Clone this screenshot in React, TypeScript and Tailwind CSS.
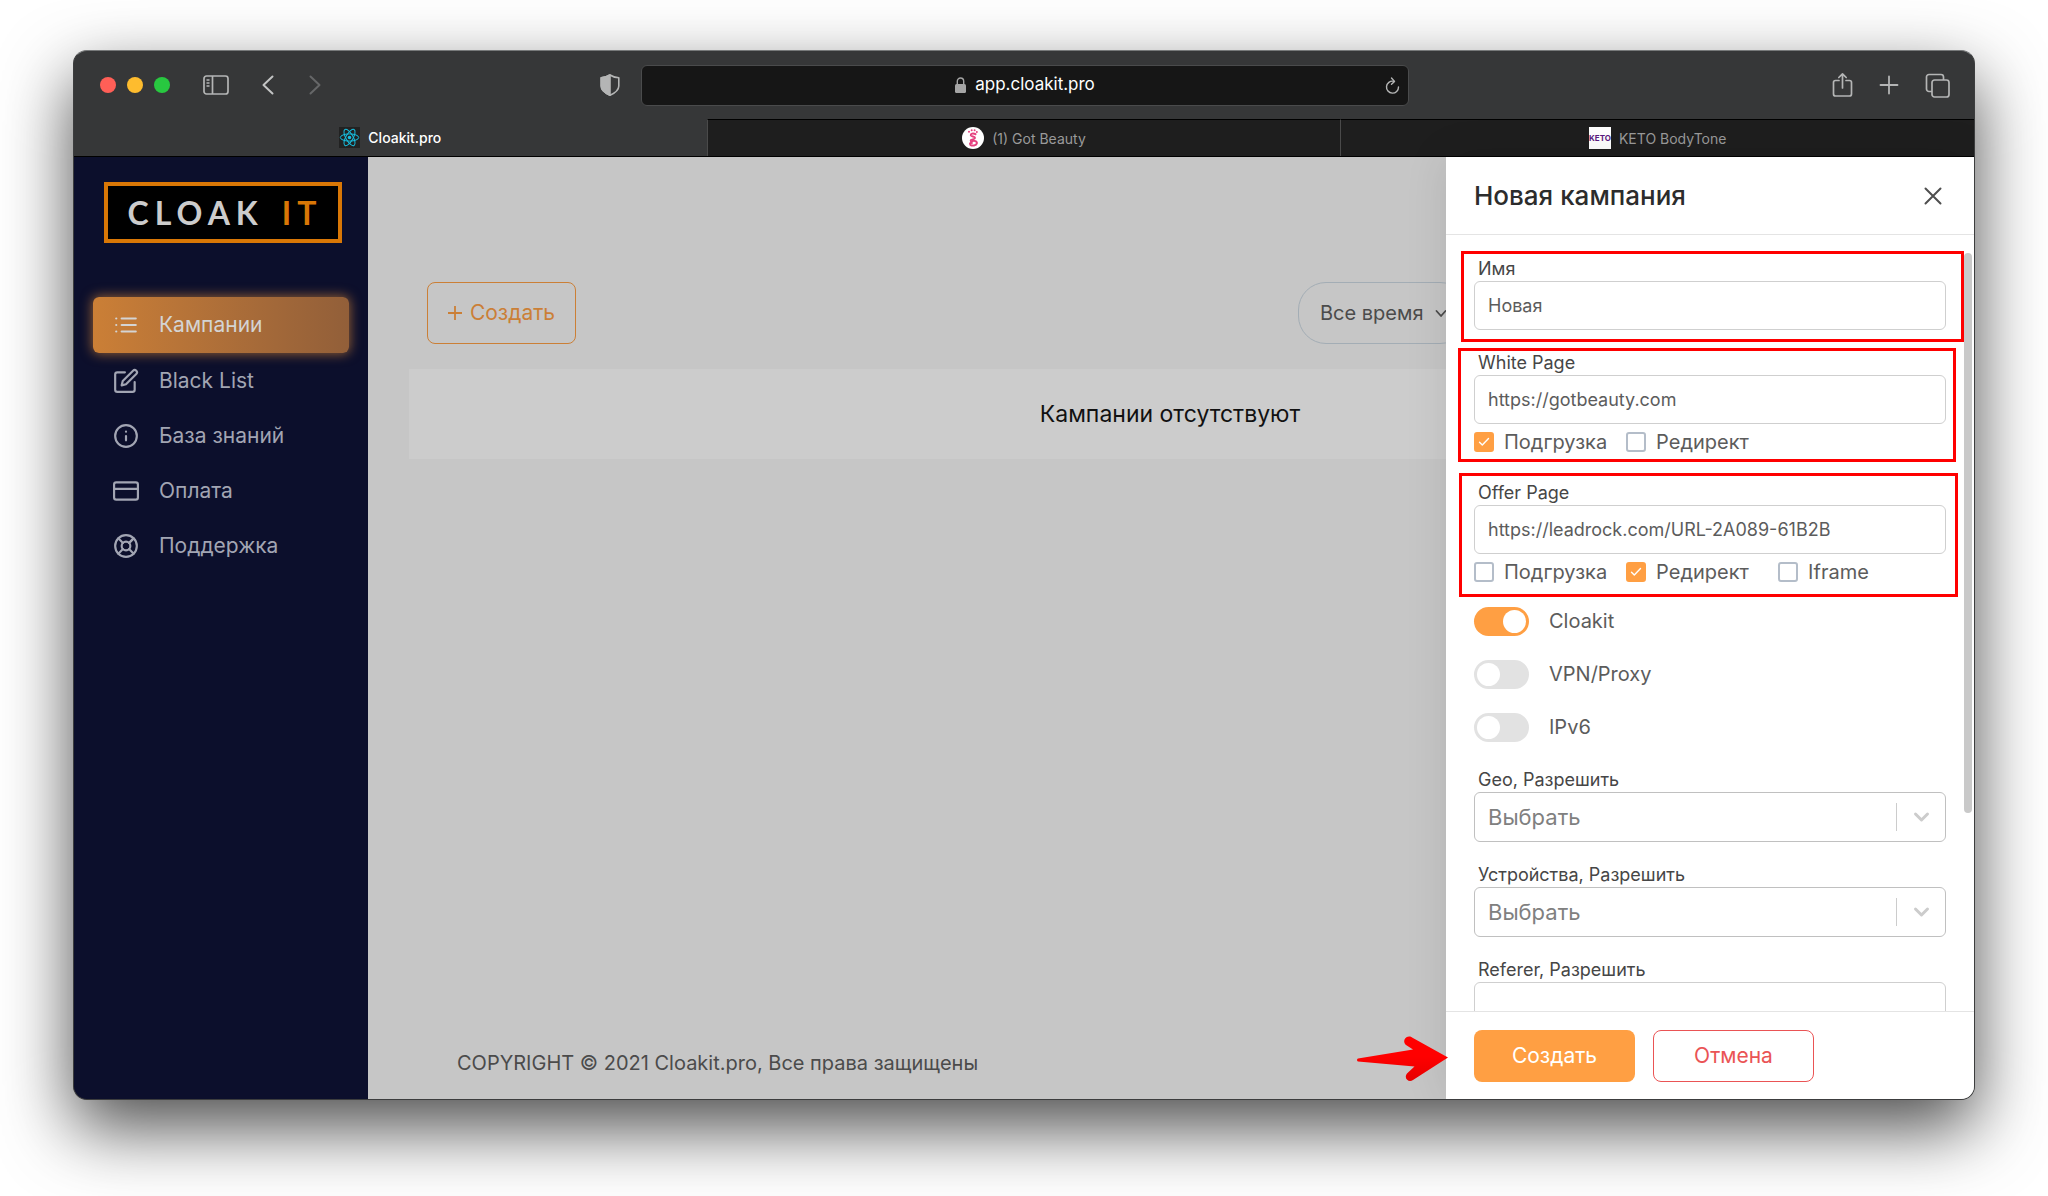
import React, { useState } from 'react';
import { FiCreditCard, FiEdit, FiInfo, FiLifeBuoy, FiList } from 'react-icons/fi';

const menuItems = [
  { label: 'Кампании', icon: FiList },
  { label: 'Black List', icon: FiEdit },
  { label: 'База знаний', icon: FiInfo },
  { label: 'Оплата', icon: FiCreditCard },
  { label: 'Поддержка', icon: FiLifeBuoy },
];

const ReactIcon: React.FC = () => (
  <svg className="w-[21px] h-[21px] bg-[#222222]" viewBox="0 0 21 21" fill="none" stroke="#17bfe0" strokeWidth="1">
    <circle cx="10.5" cy="10.5" r="1.8" fill="#17bfe0" stroke="none" />
    <ellipse cx="10.5" cy="10.5" rx="9.2" ry="3.6" />
    <ellipse cx="10.5" cy="10.5" rx="9.2" ry="3.6" transform="rotate(60 10.5 10.5)" />
    <ellipse cx="10.5" cy="10.5" rx="9.2" ry="3.6" transform="rotate(120 10.5 10.5)" />
  </svg>
);

const BeautyIcon: React.FC = () => (
  <svg className="w-[22px] h-[22px]" viewBox="0 0 22 22" fill="none" stroke="#e5417f" strokeWidth="2" strokeLinecap="round">
    <circle cx="11" cy="11" r="11" fill="#ffffff" stroke="none" />
    <path d="M13.5 7.2c-2.5-1.5-5-.5-4.700 1.100.3 1.400 4.300 1 4.200 2.700-.1 1.400-3 1.200-4.300 2.200" />
    <path d="M9 14.500c3.500-1.500 6.300-.3 5.800 2-.5 2.200-4.800 2.800-6.500 1.200-.8-1 .2-2.200 1.600-1.700" />
    <circle cx="7" cy="4.7" r="1" fill="#e5417f" stroke="none" />
    <circle cx="9.7" cy="3.3" r="1" fill="#e5417f" stroke="none" />
    <circle cx="12.6" cy="3.3" r="1" fill="#e5417f" stroke="none" />
    <circle cx="14.8" cy="5" r="1" fill="#e5417f" stroke="none" />
  </svg>
);

const KetoIcon: React.FC = () => (
  <span className="w-[22px] h-[22px] bg-white text-[#5b1a80] text-[8px] leading-[22px] font-bold text-center">
    KETO
  </span>
);

const tabs = [
  { label: 'Cloakit.pro', icon: ReactIcon },
  { label: '(1) Got Beauty', icon: BeautyIcon },
  { label: 'KETO BodyTone', icon: KetoIcon },
];

const Toolbar: React.FC = () => (
  <div className="h-[68px] flex items-center">
    <div className="flex-1 flex items-center pl-[26px]">
      <div className="flex gap-[11px]">
        <span className="w-4 h-4 rounded-full bg-[#ff5f57]" />
        <span className="w-4 h-4 rounded-full bg-[#febc2e]" />
        <span className="w-4 h-4 rounded-full bg-[#28c840]" />
      </div>
      <button className="ml-[33px]" aria-label="Sidebar">
        <svg width="26" height="20" viewBox="0 0 26 20" fill="none" stroke="#b4b5b5" strokeWidth="1.7">
          <rect x="1" y="1" width="24" height="18" rx="2.5" />
          <path d="M9.5 1v18" />
          <path d="M3.5 5h3M3.5 8h3M3.5 11h3" strokeWidth="1.3" />
        </svg>
      </button>
      <button className="ml-[33px]" aria-label="Back">
        <svg width="12" height="20" viewBox="0 0 12 20" fill="none" stroke="#c3c4c4" strokeWidth="2" strokeLinecap="round" strokeLinejoin="round">
          <path d="M10.5 1.5L1.5 10l9 8.500" />
        </svg>
      </button>
      <button className="ml-[35px]" aria-label="Forward">
        <svg width="12" height="20" viewBox="0 0 12 20" fill="none" stroke="#666768" strokeWidth="2" strokeLinecap="round" strokeLinejoin="round">
          <path d="M1.5 1.5l9 8.500-9 8.500" />
        </svg>
      </button>
      <button className="ml-auto mr-[21px]" aria-label="Privacy report">
        <svg width="20" height="22" viewBox="0 0 20 22" fill="none" stroke="#b4b5b5" strokeWidth="1.6" strokeLinejoin="round">
          <path d="M10 1c2.500 1.700 5.500 2.600 8.800 2.800v8.200c0 4-3.800 7-8.800 9.200-5-2.200-8.800-5.200-8.800-9.200V3.800C4.500 3.600 7.500 2.700 10 1z" />
          <path d="M10 1c-2.500 1.700-5.500 2.600-8.800 2.800v8.200c0 4 3.800 7 8.800 9.200z" fill="#b4b5b5" />
        </svg>
      </button>
    </div>
    <div className="w-[768px] h-[41px] flex items-center justify-center relative bg-[#161616] border border-[#4a4b4c] rounded-md">
      <svg className="mr-[9px]" width="11" height="16" viewBox="0 0 11 16" fill="none">
        <rect y="7" width="11" height="9" rx="1.5" fill="#a5a5a5" />
        <path d="M2.300 7V4.200a3.200 3.200 0 0 1 6.400 0V7" stroke="#a5a5a5" strokeWidth="1.4" />
      </svg>
      <input aria-label="Address" defaultValue="app.cloakit.pro" className="field-sizing-content bg-transparent text-white text-[17px] outline-none" />
      <button className="absolute right-2 top-[11px]" aria-label="Reload">
        <svg width="15" height="18" viewBox="0 0 15 18" fill="none" stroke="#b4b5b5" strokeWidth="1.4" strokeLinecap="round" strokeLinejoin="round">
          <path d="M8.500 4.200A6 6 0 1 0 13.500 10" />
          <path d="M6.500 1l3 3.400L6.500 7.200" />
        </svg>
      </button>
    </div>
    <div className="flex-1 flex items-center justify-end pr-6 text-[#b4b5b5]">
      <button aria-label="Share">
        <svg width="21" height="26" viewBox="0 0 21 26" fill="none" stroke="currentColor" strokeWidth="1.7" strokeLinecap="round" strokeLinejoin="round">
          <path d="M7 8.500H3.500a2 2 0 0 0-2 2V22a2 2 0 0 0 2 2h14a2 2 0 0 0 2-2V10.500a2 2 0 0 0-2-2H14" />
          <path d="M10.500 16V2M6.800 5.500L10.500 1.800l3.700 3.700" />
        </svg>
      </button>
      <button className="ml-[26px]" aria-label="New tab">
        <svg width="20" height="20" viewBox="0 0 20 20" fill="none" stroke="currentColor" strokeWidth="1.8" strokeLinecap="round">
          <path d="M10 1.500v17M1.500 10h17" />
        </svg>
      </button>
      <button className="ml-[26px]" aria-label="Show tabs">
        <svg width="25" height="25" viewBox="0 0 25 25" fill="none" stroke="currentColor" strokeWidth="1.7" strokeLinejoin="round">
          <rect x="7" y="7" width="17" height="17" rx="2.5" />
          <path d="M7 18.500H4A2.500 2.500 0 0 1 1.500 16V4A2.500 2.500 0 0 1 4 1.500h12A2.500 2.500 0 0 1 18.500 4v3" />
        </svg>
      </button>
    </div>
  </div>
);

const Checkbox: React.FC<{ label: string; checked?: boolean }> = ({ label, checked }) => (
  <label className="relative min-w-[133px] flex items-center gap-[10px] text-[20px] leading-5 text-[#5c5c5c] whitespace-nowrap">
    <input
      type="checkbox"
      defaultChecked={checked}
      className="peer appearance-none w-5 h-5 border-2 border-[#b4bdc9] rounded-[3px] checked:bg-[#ff9f43] checked:border-[#ff9f43]"
    />
    <svg className="absolute left-[4px] top-[4px] hidden peer-checked:block pointer-events-none" width="12" height="12" viewBox="0 0 12 12" fill="none" stroke="#ffffff" strokeWidth="1.4" strokeLinecap="round" strokeLinejoin="round">
      <path d="M1.500 6.200l2.800 2.800L10.500 2.500" />
    </svg>
    {label}
  </label>
);

const TextField: React.FC<{ id: string; label: string; value?: string }> = ({ id, label, value }) => (
  <div className="flex flex-col gap-[2px]">
    <label htmlFor={id} className="pl-1 text-[18px] leading-5 text-[#464646]">{label}</label>
    <input id={id} type="text" defaultValue={value} className="w-full h-[49px] px-[13px] text-[18px] text-[#5c5c5c] border border-[#cfcfcf] rounded-md outline-none" />
  </div>
);

const SelectField: React.FC<{ id: string; label: string }> = ({ id, label }) => (
  <div className="flex flex-col gap-[2px]">
    <label htmlFor={id} className="pl-1 text-[18px] leading-5 text-[#464646]">{label}</label>
    <div className="relative">
      <select id={id} className="appearance-none w-full h-[50px] px-[13px] text-[22px] text-[#808080] bg-white border border-[#c0c0c0] rounded-md">
        <option>Выбрать</option>
      </select>
      <div className="absolute right-4 top-[11px] h-7 flex items-center gap-4 pointer-events-none">
        <span className="w-px h-full bg-[#cccccc]" />
        <svg width="17" height="12" viewBox="0 0 17 12" fill="none" stroke="#cccccc" strokeWidth="3" strokeLinecap="round" strokeLinejoin="round">
          <path d="M2.500 3l6 6 6-6" />
        </svg>
      </div>
    </div>
  </div>
);

const Toggle: React.FC<{ label: string; checked?: boolean }> = ({ label, checked }) => (
  <label className="flex items-start gap-5 text-[20px] leading-7 text-[#5c5c5c]">
    <input
      type="checkbox"
      role="switch"
      defaultChecked={checked}
      className="appearance-none w-[55px] h-[29px] p-[3px] rounded-full bg-[#e2e2e2] checked:bg-[#ff9f43] flex checked:justify-end before:content-[''] before:w-[23px] before:h-[23px] before:rounded-full before:bg-white"
    />
    {label}
  </label>
);

const Drawer: React.FC<{ onClose: () => void }> = ({ onClose }) => (
  <aside className="absolute right-0 inset-y-0 w-[528px] flex flex-col bg-white shadow-[0_0_40px_rgba(0,0,0,0.1)]">
    <header className="h-[78px] px-7 flex items-center justify-between border-b border-[#e4e4e4]">
      <h2 className="text-[26px] font-medium text-[#2c2c2c]">Новая кампания</h2>
      <button onClick={onClose} aria-label="Закрыть" className="mr-1">
        <svg width="18" height="18" viewBox="0 0 18 18" fill="none" stroke="#4f4f4f" strokeWidth="2" strokeLinecap="round">
          <path d="M1.500 1.500l15 15M16.500 1.500l-15 15" />
        </svg>
      </button>
    </header>

    <div className="relative flex-1 min-h-0 overflow-hidden px-7 pt-6">
      <div className="relative">
        <TextField id="name" label="Имя" value="Новая" />
        <div className="absolute -top-2 -left-[13px] -right-[18px] -bottom-3 border-3 border-[#ff0000] pointer-events-none" />
      </div>

      <div className="relative mt-[23px]">
        <TextField id="white" label="White Page" value="https://gotbeauty.com" />
        <div className="mt-2 flex gap-[19px]">
          <Checkbox label="Подгрузка" checked />
          <Checkbox label="Редирект" />
        </div>
        <div className="absolute -top-[5px] -left-4 -right-[10px] -bottom-[10px] border-3 border-[#ff0000] pointer-events-none" />
      </div>

      <div className="relative mt-[31px]">
        <TextField id="offer" label="Offer Page" value="https://leadrock.com/URL-2A089-61B2B" />
        <div className="mt-2 flex gap-[19px]">
          <Checkbox label="Подгрузка" />
          <Checkbox label="Редирект" checked />
          <Checkbox label="Iframe" />
        </div>
        <div className="absolute -top-[10px] -left-[15px] -right-3 -bottom-[15px] border-3 border-[#ff0000] pointer-events-none" />
      </div>

      <div className="mt-[25px] flex flex-col gap-6">
        <Toggle label="Cloakit" checked />
        <Toggle label="VPN/Proxy" />
        <Toggle label="IPv6" />
      </div>

      <div className="mt-7 flex flex-col gap-[23px]">
        <SelectField id="geo" label="Geo, Разрешить" />
        <SelectField id="devices" label="Устройства, Разрешить" />
        <TextField id="referer" label="Referer, Разрешить" />
      </div>

      <div className="absolute right-[2px] top-[18px] w-2 h-[560px] rounded-full bg-[#c9c9c9]" />
    </div>

    <footer className="h-[88px] px-7 pt-[18px] flex gap-[18px] border-t border-[#e4e4e4]">
      <button className="w-[161px] h-[52px] rounded-lg bg-[#ff9f43] text-white text-[21px]">Создать</button>
      <button onClick={onClose} className="w-[161px] h-[52px] rounded-lg border border-[#ea5455] text-[#ea5455] text-[21px]">Отмена</button>
    </footer>

    <svg className="absolute -left-[89px] bottom-[17px] pointer-events-none" width="92" height="46" viewBox="0 0 92 46">
      <defs>
        <linearGradient id="arrow" x1="0" y1="0" x2="0" y2="1">
          <stop offset="0.45" stopColor="#ff0000" />
          <stop offset="1" stopColor="#e60000" />
        </linearGradient>
      </defs>
      <path
        d="M1 22.500L56 13.500l-7-4.500c-3-2-2.500-8 3-8.500 1.500 0 2.500.5 3.500 1.200L91 21.500 56 44c-3 2-7 .5-7.200-3-.1-1.500.6-3 1.700-4l7-6.500L1 25.500c-1.300-.5-1.300-2.500 0-3z"
        fill="url(#arrow)"
      />
    </svg>
  </aside>
);

const App: React.FC = () => {
  const [activeTab, setActiveTab] = useState(0);
  const [activeItem, setActiveItem] = useState(0);
  const [drawerOpen, setDrawerOpen] = useState(true);

  return (
    <div className="h-screen px-[73px] pt-[50px] pb-24 bg-white font-['Inter',sans-serif] overflow-hidden">
      <div className="h-full flex flex-col bg-[#363738] border border-[#3c3d3e] border-t-[#77797a] rounded-[14px] overflow-hidden shadow-[0_28px_70px_rgba(0,0,0,0.7)]">
        <Toolbar />

        <nav className="h-[38px] flex border-b border-black">
          {tabs.map((tab, index) => (
            <button
              key={tab.label}
              onClick={() => setActiveTab(index)}
              className={`flex-1 flex items-center justify-center gap-2 text-[14px] ${
                index === activeTab ? 'text-white font-medium' : 'bg-[#1e1e1e] text-[#9a9a9a] border-t border-t-black border-l border-l-[#4a4a4a]'
              }`}
            >
              <tab.icon />
              {tab.label}
            </button>
          ))}
        </nav>

        <div className="relative flex-1 min-h-0 flex">
          <aside className="w-[294px] shrink-0 bg-[#0c0f2c] pt-[25px]">
            <a href="#" className="ml-[30px] w-[238px] h-[61px] pl-1 flex items-center justify-center gap-[18px] bg-black border-4 border-[#d97706] font-['Lato',sans-serif] font-bold text-[32px] tracking-[6px]">
              <span className="text-[#cccccc]">CLOAK</span>
              <span className="text-[#d97706]">IT</span>
            </a>
            <ul className="mt-[54px] px-[19px]">
              {menuItems.map((item, index) => (
                <li key={item.label}>
                  <a
                    href="#"
                    onClick={() => setActiveItem(index)}
                    className={`px-5 flex items-center gap-5 text-[21px] rounded-md ${
                      index === activeItem
                        ? 'h-14 text-[#d4d4d4] bg-linear-to-r from-[#cb7f36] to-[#925f39] shadow-[0_0_12px_1px_rgba(203,127,54,0.7)]'
                        : 'h-[55px] text-[#a2a5b3]'
                    }`}
                  >
                    <item.icon className="w-[26px] h-[26px]" />
                    {item.label}
                  </a>
                </li>
              ))}
            </ul>
          </aside>

          <main className="flex-1 flex flex-col bg-[#c6c6c6] pl-[41px] pr-[43px]">
            <div className="mt-[125px] pl-[18px] pr-[463px] flex items-center justify-between">
              <button onClick={() => setDrawerOpen(true)} className="w-[149px] h-[62px] flex items-center justify-center gap-2 text-[21px] text-[#cb7f36] border border-[#cb7f36] rounded-lg">
                <svg width="14" height="14" viewBox="0 0 14 14" stroke="currentColor" strokeWidth="1.8">
                  <path d="M7 0v14M0 7h14" />
                </svg>
                Создать
              </button>
              <div className="relative">
                <select aria-label="Период" className="appearance-none w-[170px] h-[62px] pl-[21px] text-[20px] text-[#4b4b4b] border border-[#a3adb5] rounded-[28px]">
                  <option>Все время</option>
                </select>
                <svg className="absolute right-[21px] top-[27px] pointer-events-none" width="12" height="9" viewBox="0 0 12 9" fill="none" stroke="#4b4b4b" strokeWidth="1.8" strokeLinecap="round" strokeLinejoin="round">
                  <path d="M1.500 2L6 7l4.500-5" />
                </svg>
              </div>
            </div>
            <p className="mt-[25px] h-[90px] flex items-center justify-center bg-[#cccccc] text-[23px] text-[#111111]">Кампании отсутствуют</p>
            <p className="mt-auto mb-[22px] pl-12 text-[20px] leading-7 text-[#4b4b4b]">COPYRIGHT © 2021 Cloakit.pro, Все права защищены</p>
          </main>

          {drawerOpen && <Drawer onClose={() => setDrawerOpen(false)} />}
        </div>
      </div>
    </div>
  );
};

export default App;
